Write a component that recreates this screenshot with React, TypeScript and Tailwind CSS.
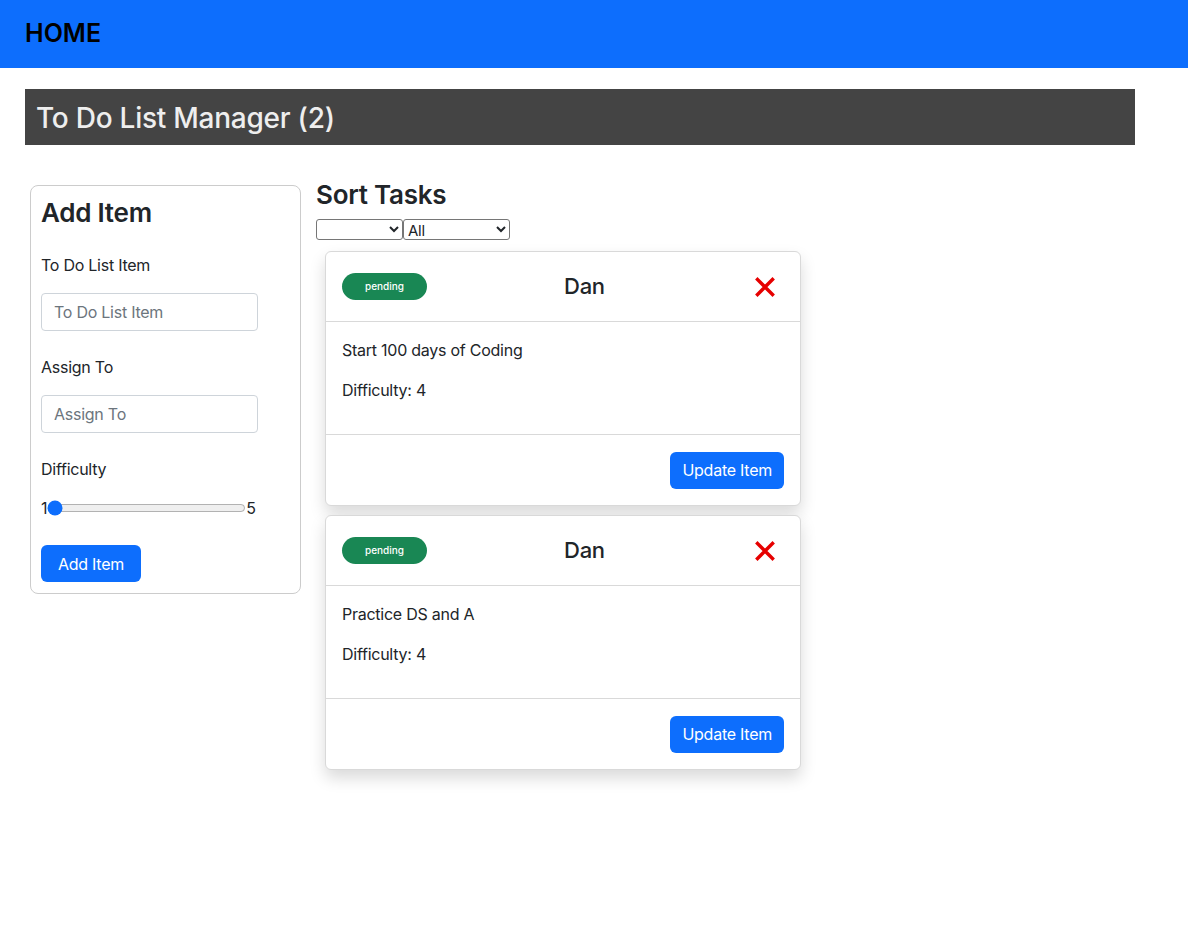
import { useState } from 'react';

/* ------------------ Types ------------------ */
interface Task {
  id: number;
  text: string;
  assignee: string;
  difficulty: number;
  complete: boolean;
}

const initialTasks: Task[] = [
  { id: 1, text: 'Start 100 days of Coding', assignee: 'Dan', difficulty: 4, complete: false },
  { id: 2, text: 'Practice DS and A', assignee: 'Dan', difficulty: 4, complete: false },
];

/* ------------------ Small pieces ------------------ */
function CloseIcon() {
  return (
    <svg width="20" height="20" viewBox="0 0 20 20" aria-hidden="true">
      <path d="M2.5 2.5 L17.5 17.5 M17.5 2.5 L2.5 17.5" stroke="#e60000" strokeWidth="3.4" strokeLinecap="square" />
    </svg>
  );
}

function TaskCard({ task }: { task: Task }) {
  return (
    <div className="w-[476px] bg-white border border-[#d9d9d9] rounded-[6px] shadow-[0_8px_16px_rgba(0,0,0,0.15)]">
      <div className="h-[70px] px-4 flex items-center border-b border-[#d9d9d9]">
        <span className="w-[85px] h-[27px] rounded-full bg-[#198754] text-white text-[10px] font-medium tracking-normal flex items-center justify-center">
          {task.complete ? 'complete' : 'pending'}
        </span>
        <span className="ml-[137px] text-[22px] font-medium text-[#212529]">{task.assignee}</span>
        <button className="ml-auto mr-[9px] flex items-center">
          <CloseIcon />
        </button>
      </div>
      <div className="px-4 pt-4 pb-4 border-b border-[#d9d9d9] text-[16px] text-[#212529]">
        <p className="leading-6 mb-4">{task.text}</p>
        <p className="leading-6 mb-4">Difficulty: {task.difficulty}</p>
      </div>
      <div className="h-[70px] px-4 flex items-center justify-end">
        <button className="h-[37px] px-3 bg-[#0d6efd] text-white text-[16px] rounded-[6px]">
          Update Item
        </button>
      </div>
    </div>
  );
}

/* ------------------ Page ------------------ */
export default function App() {
  const [tasks] = useState<Task[]>(initialTasks);
  const [difficulty, setDifficulty] = useState(1);

  return (
    <div
      className="min-h-[952px] bg-white text-[#212529] tracking-[-0.25px]"
      style={{ fontFamily: 'Inter, "Liberation Sans", sans-serif' }}
    >
      <nav className="h-[68px] bg-[#0d6efd] flex items-center px-[25px]">
        <span className="text-[25px] font-semibold text-black tracking-normal">HOME</span>
      </nav>

      <header className="mt-[21px] ml-[25px] w-[1110px] h-[56px] bg-[#444444] flex items-center px-[11px]">
        <h1 className="text-[28px] font-medium text-[#eeeeee] pt-[1px]">
          To Do List Manager ({tasks.filter((t) => !t.complete).length})
        </h1>
      </header>

      <main className="flex items-start">
        <form className="mt-[40px] ml-[30px] w-[271px] h-[409px] border border-[#cccccc] rounded-[8px] px-[10px] pt-[10px]">
          <h2 className="text-[26px] font-semibold leading-[34px] mb-[23px]">Add Item</h2>

          <label className="block text-[16px] leading-6">To Do List Item</label>
          <input
            placeholder="To Do List Item"
            className="mt-4 w-[217px] h-[38px] px-3 border border-[#ced4da] rounded-[4px] text-[16px] placeholder:text-[#6c757d] outline-none"
          />

          <label className="block mt-6 text-[16px] leading-6">Assign To</label>
          <input
            placeholder="Assign To"
            className="mt-4 w-[217px] h-[38px] px-3 border border-[#ced4da] rounded-[4px] text-[16px] placeholder:text-[#6c757d] outline-none"
          />

          <label className="block mt-6 text-[16px] leading-6">Difficulty</label>
          <div className="mt-4 flex items-center h-[22px] text-[16px]">
            <span>1</span>
            <input
              type="range"
              min={1}
              max={5}
              value={difficulty}
              onChange={(e) => setDifficulty(Number(e.target.value))}
              className="w-[199px] m-0 accent-[#0d6efd]"
            />
            <span>5</span>
          </div>

          <button type="button" className="mt-[26px] w-[100px] h-[37px] bg-[#0d6efd] text-white text-[16px] rounded-[6px]">
            Add Item
          </button>
        </form>

        <section className="ml-[15px] mt-[33px]">
          <h2 className="text-[26px] font-semibold leading-[34px] mb-[7px]">Sort Tasks</h2>
          <div className="flex">
            <select className="w-[87px] h-[21px] border border-[#767676] rounded-[3px] text-[15px] bg-white">
              <option value=""></option>
              <option value="difficulty">Difficulty</option>
            </select>
            <select className="w-[107px] h-[21px] border border-[#767676] rounded-[3px] text-[15px] bg-white">
              <option>All</option>
              <option>Pending</option>
              <option>Complete</option>
            </select>
          </div>

          <div className="ml-[9px] mt-[11px] flex flex-col gap-[9px]">
            {tasks.map((task) => (
              <TaskCard key={task.id} task={task} />
            ))}
          </div>
        </section>
      </main>
    </div>
  );
}
